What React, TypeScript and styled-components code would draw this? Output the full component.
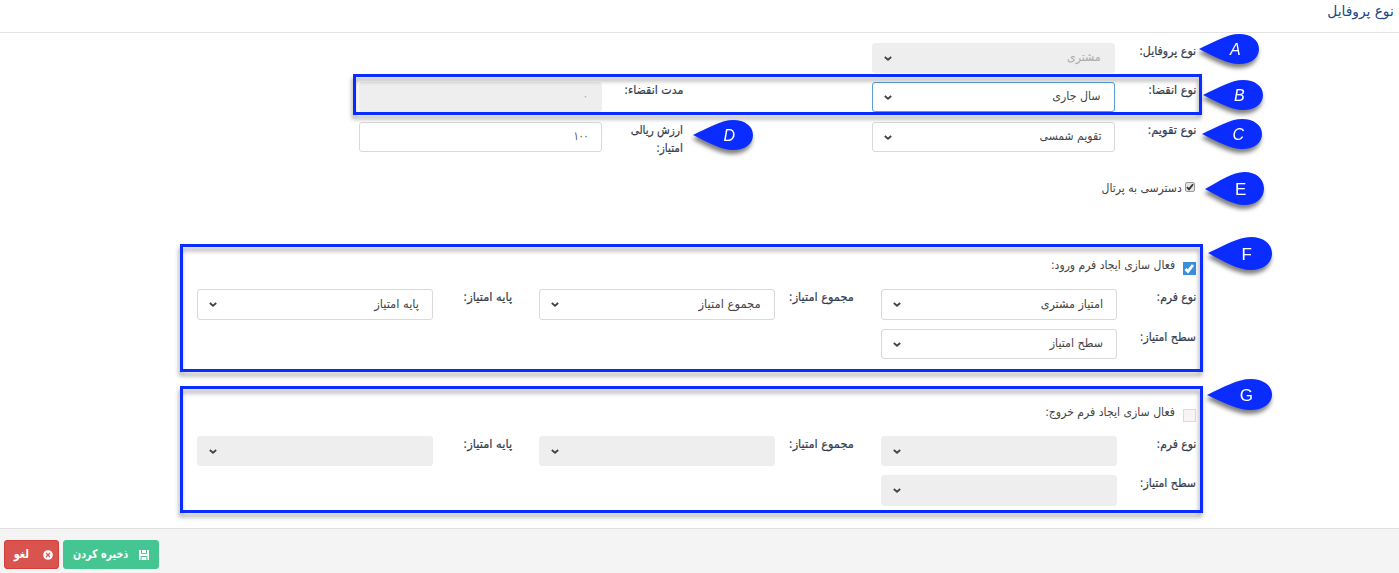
import React from 'react';
import styled, { createGlobalStyle } from 'styled-components';

const GlobalStyle = createGlobalStyle`
  * { box-sizing: border-box; }
  body {
    margin: 0;
    background: #fff;
    color: #444;
    font: 12px/18px "DejaVu Sans", sans-serif;
    overflow: hidden;
  }
`;

const Page = styled.div`
  direction: rtl;
  position: relative;
  height: 573px;
  display: flex;
  flex-direction: column;
`;

const Header = styled.header`
  height: 33px;
  border-bottom: 1px solid #e3e3e3;
  padding: 3px 5px 0 0;
  color: #1c4587;
  font-size: 14px;
`;

const Main = styled.main`
  flex: 1;
  padding: 10px 196px 0 0;
`;

const Condensed = styled.span<{ $scale: number }>`
  display: inline-block;
  white-space: nowrap;
  transform: translateY(-1px) scaleX(${(p) => p.$scale});
  transform-origin: right center;
`;

const GeneralGrid = styled.section`
  display: grid;
  grid-template-columns: 81px 243px 189px 81px 243px;
  grid-template-rows: 39px 40px 40px;
  padding-right: 7px;
  align-items: start;
`;

const Label = styled.label<{ $col?: number }>`
  grid-column: ${(p) => p.$col ?? 'auto'};
  color: #333b4d;
  -webkit-text-stroke: 0.2px #333b4d;
`;

const Field = styled.div<{ $disabled?: boolean; $focus?: boolean; $height?: number }>`
  height: ${(p) => p.$height ?? 30}px;
  display: flex;
  align-items: center;
  justify-content: space-between;
  padding: 0 13px 0 11px;
  border: 1px solid ${(p) => (p.$disabled ? '#eee' : p.$focus ? '#5a9fd8' : '#d9d9d9')};
  border-radius: 3px;
  background: ${(p) => (p.$disabled ? '#eee' : '#fff')};
  color: ${(p) => (p.$disabled ? '#aaa' : '#444')};
`;

const PortalRow = styled.div`
  display: flex;
  align-items: center;
  gap: 3px;
  height: 20px;
  margin: 17px 8px 0 0;
`;

const SmallCheck = styled.span`
  width: 10px;
  height: 10px;
  margin-top: -4px;
  border: 1px solid #9a9a9a;
  border-radius: 2px;
  background: #e4e4e4;
  display: flex;
`;

const FramedSection = styled.section<{ $top: number; $height: number; $pad: number }>`
  position: relative;
  width: 1023px;
  height: ${(p) => p.$height}px;
  margin-top: ${(p) => p.$top}px;
  padding: ${(p) => p.$pad}px 7px 0 0;
`;

const Frame = styled.div`
  position: absolute;
  inset: 0;
  border: 3px solid #0a2cff;
  filter: drop-shadow(-1px 4px 2px rgba(0, 0, 0, 0.35));
  pointer-events: none;
`;

const ExpiryFrame = styled(Frame)`
  inset: 74px 197px 458px 353px;
`;

const ToggleRow = styled.div`
  display: flex;
  gap: 8px;
  height: 32px;
`;

const Toggle = styled.span<{ $on?: boolean }>`
  width: 13px;
  height: 13px;
  margin-top: 5px;
  display: flex;
  background: ${(p) => (p.$on ? '#3a8fdc' : '#f8f4f4')};
  border: 1px solid ${(p) => (p.$on ? '#3a8fdc' : '#dcdada')};
`;

const FormGrid = styled.div`
  display: grid;
  grid-template-columns: 79px 236px 27px 79px 236px 27px 79px 236px;
  row-gap: 9px;
  align-items: start;
`;

const Footer = styled.footer`
  height: 45px;
  background: #f4f4f4;
  border-top: 1px solid #e0e0e0;
  padding: 11px 0 0 4px;
  display: flex;
  direction: ltr;
  gap: 4px;
`;

const Button = styled.button<{ $tone: 'save' | 'cancel' }>`
  height: 29px;
  width: ${(p) => (p.$tone === 'save' ? 96 : 55)}px;
  padding: 0 ${(p) => (p.$tone === 'save' ? 9 : 5)}px 0 0;
  border: 1px solid ${(p) => (p.$tone === 'save' ? '#45c592' : '#d43f3a')};
  border-radius: 3px;
  background: ${(p) => (p.$tone === 'save' ? '#45c592' : '#d9534f')};
  color: #fff;
  font: bold 12px/18px "DejaVu Sans", sans-serif;
  display: flex;
  align-items: center;
  gap: ${(p) => (p.$tone === 'save' ? 11 : 14)}px;
  direction: rtl;

  svg { flex: none; }
`;

const PinShape = styled.svg<{ $x: number; $y: number }>`
  position: absolute;
  left: ${(p) => p.$x}px;
  top: ${(p) => p.$y}px;
  overflow: visible;
  direction: ltr;
  filter: drop-shadow(-1px 4px 2px rgba(0, 0, 0, 0.5));
`;

/* Every text is set slightly narrower than the font's natural width. */
const Txt = ({ s = 1, children }: { s?: number; children: React.ReactNode }) => (
  <Condensed $scale={s * 0.917}>{children}</Condensed>
);

const Chevron = () => (
  <svg width="8" height="5" viewBox="0 0 8 5">
    <path d="M0.8 1 L4 3.7 L7.2 1" fill="none" stroke="#444" strokeWidth="1.8" />
  </svg>
);

const Select = ({ text, s, ...rest }: { text?: string; s?: number; $disabled?: boolean; $focus?: boolean; $height?: number }) => (
  <Field {...rest}>
    <Txt s={s}>{text}</Txt>
    <Chevron />
  </Field>
);

const Pin = ({ x, y, w = 60, h = 30, tip, letter, upright }: { x: number; y: number; w?: number; h?: number; tip: number; letter: string; upright?: boolean }) => (
  <PinShape $x={x} $y={y} width={w} height={h}>
    <path
      d={`M0 ${tip} C${w * 0.25} ${h * 0.27} ${w * 0.47} 0 ${w * 0.67} 0 C${w * 0.86} 0 ${w} ${h * 0.2} ${w} ${h / 2} C${w} ${h * 0.8} ${w * 0.86} ${h} ${w * 0.67} ${h} C${w * 0.47} ${h} ${w * 0.25} ${h * 0.75} 0 ${tip}Z`}
      fill="#0a2cff"
    />
    <text
      x={w * 0.605}
      y={h / 2 + 6}
      textAnchor="middle"
      fill="#fff"
      fontFamily="Liberation Sans, sans-serif"
      fontSize={upright ? 17 : 16}
      fontStyle={upright ? 'normal' : 'italic'}
    >
      {letter}
    </text>
  </PinShape>
);

const ScoreForm = ({ on, firstHeight, secondHeight }: { on?: boolean; firstHeight: number; secondHeight: number }) => (
  <FormGrid>
    <Label><Txt s={0.98}>نوع فرم:</Txt></Label>
    <Select text={on ? 'امتیاز مشتری' : ''} s={1.015} $disabled={!on} $height={firstHeight} />
    <Label $col={4}><Txt s={1.03}>مجموع امتیاز:</Txt></Label>
    <Select text={on ? 'مجموع امتیاز' : ''} s={1.05} $disabled={!on} $height={firstHeight} />
    <Label $col={7}><Txt s={1.04}>پایه امتیاز:</Txt></Label>
    <Select text={on ? 'پایه امتیاز' : ''} s={1.04} $disabled={!on} $height={firstHeight} />
    <Label $col={1}><Txt s={0.99}>سطح امتیاز:</Txt></Label>
    <Select text={on ? 'سطح امتیاز' : ''} $disabled={!on} $height={secondHeight} />
  </FormGrid>
);

export default function App() {
  return (
    <Page>
      <GlobalStyle />
      <Header><Txt s={1.07}>نوع پروفایل</Txt></Header>
      <Main>
        <GeneralGrid>
          <Label><Txt>نوع پروفایل:</Txt></Label>
          <Select text="مشتری" $disabled />
          <Label $col={1}><Txt s={1.02}>نوع انقضا:</Txt></Label>
          <Select text="سال جاری" $focus />
          <Label $col={4}><Txt>مدت انقضاء:</Txt></Label>
          <Field $disabled><Txt>۰</Txt></Field>
          <Label $col={1}><Txt s={1.04}>نوع تقویم:</Txt></Label>
          <Select text="تقویم شمسی" s={0.985} />
          <Label $col={4}><Txt s={0.95}>ارزش ریالی<br />امتیاز:</Txt></Label>
          <Field><Txt s={0.82}>۱۰۰</Txt></Field>
        </GeneralGrid>
        <PortalRow>
          <SmallCheck>
            <svg width="8" height="8" viewBox="0 0 8 8"><path d="M1 4.2 L3 6.3 L7 1.2" fill="none" stroke="#333" strokeWidth="1.8" /></svg>
          </SmallCheck>
          <Txt s={0.985}>دسترسی به پرتال</Txt>
        </PortalRow>
        <FramedSection $top={45} $height={128} $pad={13}>
          <ToggleRow>
            <Toggle $on>
              <svg width="11" height="11" viewBox="0 0 11 11"><path d="M1.5 6 L4 8.4 L9 2" fill="none" stroke="#fff" strokeWidth="2.8" /></svg>
            </Toggle>
            <Txt s={0.98}>فعال سازی ایجاد فرم ورود:</Txt>
          </ToggleRow>
          <ScoreForm on firstHeight={31} secondHeight={30} />
          <Frame />
        </FramedSection>
        <FramedSection $top={14} $height={127} $pad={18}>
          <ToggleRow>
            <Toggle />
            <Txt s={0.99}>فعال سازی ایجاد فرم خروج:</Txt>
          </ToggleRow>
          <ScoreForm firstHeight={30} secondHeight={31} />
          <Frame />
        </FramedSection>
      </Main>
      <Footer>
        <Button $tone="cancel">
          <svg width="10" height="10" viewBox="0 0 10 10"><circle cx="5" cy="5" r="4.8" fill="#fff" /><path d="M3 3 L7 7 M7 3 L3 7" stroke="#d9534f" strokeWidth="1.2" /></svg>
          <Txt s={0.88}>لغو</Txt>
        </Button>
        <Button $tone="save">
          <svg width="10" height="10" viewBox="0 0 10 10"><path d="M0 0H10V10H0Z" fill="#fff" /><path d="M2.5 0V3.5H7.5V0 M2 10V6.5H8V10" fill="none" stroke="#45c592" strokeWidth="1" /></svg>
          <Txt s={0.87}>ذخیره کردن</Txt>
        </Button>
      </Footer>
      <ExpiryFrame />
      <Pin x={1199} y={34} tip={15} letter="A" />
      <Pin x={1203} y={80} tip={15} letter="B" />
      <Pin x={1202} y={119} tip={15} letter="C" />
      <Pin x={693} y={120} tip={15} letter="D" />
      <Pin x={1205} y={172} h={33} w={59} tip={17} letter="E" upright />
      <Pin x={1208} y={237} h={33} w={64} tip={16} letter="F" upright />
      <Pin x={1207} y={379} h={31} w={65} tip={16} letter="G" upright />
    </Page>
  );
}
